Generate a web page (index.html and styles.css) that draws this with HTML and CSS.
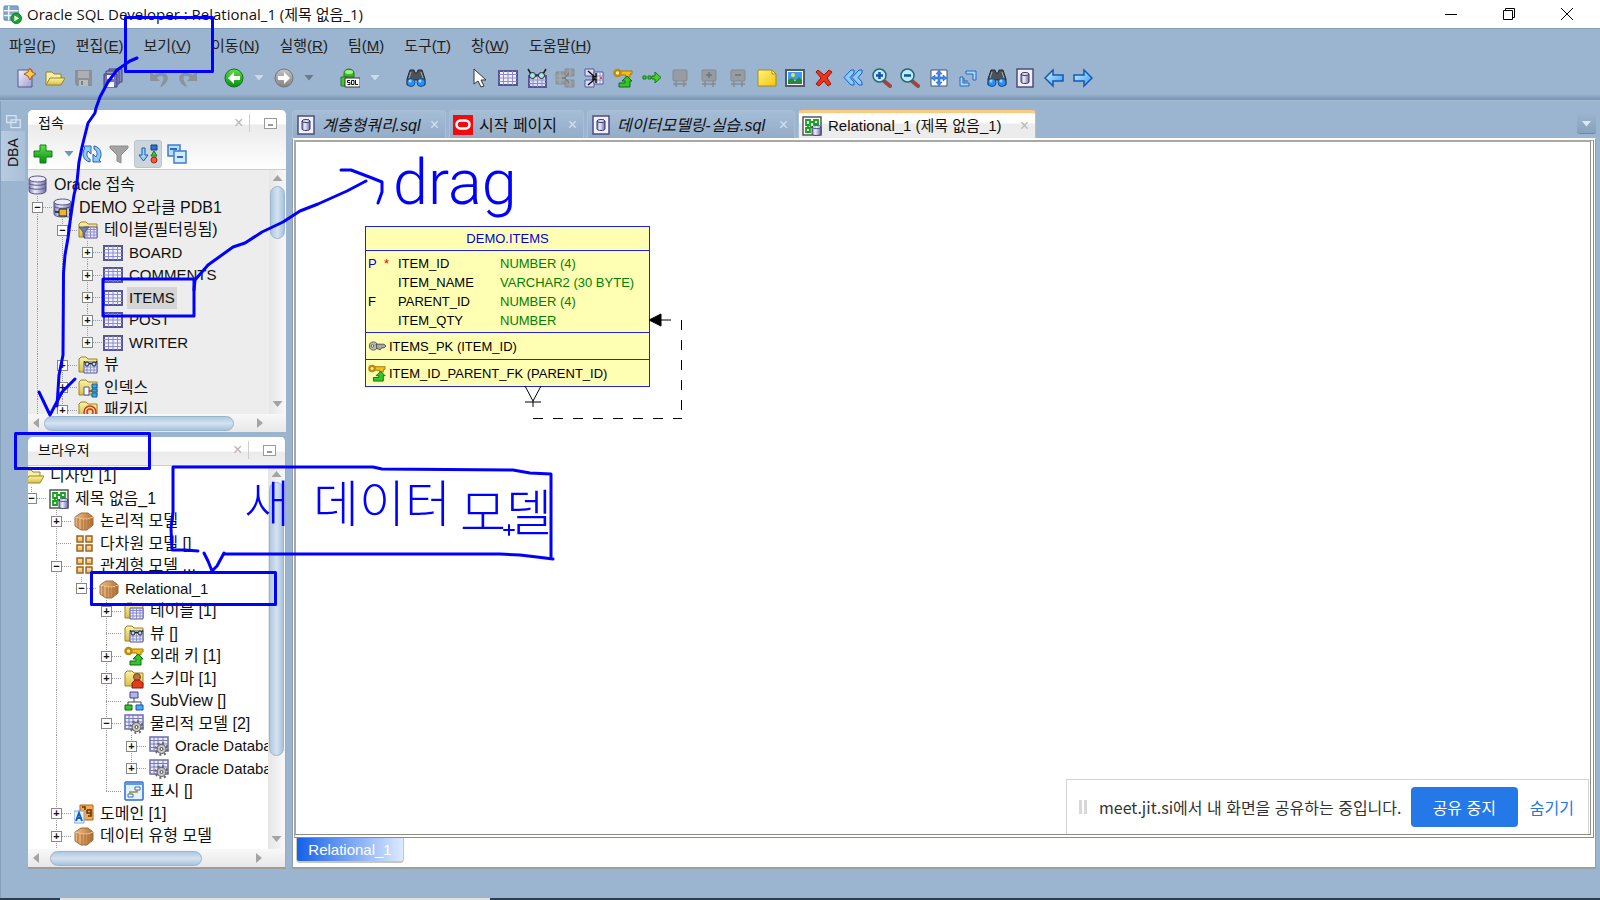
FILE: index.html
```html
<!DOCTYPE html>
<html lang="ko">
<head>
<meta charset="utf-8">
<title>Oracle SQL Developer : Relational_1 (제목 없음_1)</title>
<link rel="stylesheet" href="styles.css">
</head>
<body>
<svg class="defs" aria-hidden="true">
  <defs>
    <linearGradient id="g-lav" x1="0" y1="0" x2="1" y2="1"><stop offset="0" stop-color="#f4f4ff"/><stop offset="1" stop-color="#9c9cd2"/></linearGradient>
    <linearGradient id="g-cyl" x1="0" x2="1"><stop offset="0" stop-color="#7c7cb0"/><stop offset=".35" stop-color="#f0f0fc"/><stop offset="1" stop-color="#6a6aa4"/></linearGradient>
    <linearGradient id="g-fold" x1="0" y1="0" x2="0" y2="1"><stop offset="0" stop-color="#fbf3a4"/><stop offset="1" stop-color="#d9bf4c"/></linearGradient>
    <linearGradient id="g-blue" x1="0" y1="0" x2="1" y2="1"><stop offset="0" stop-color="#d8f2ff"/><stop offset="1" stop-color="#2a9cf4"/></linearGradient>
    <linearGradient id="g-green" x1="0" y1="0" x2="0" y2="1"><stop offset="0" stop-color="#5fe04a"/><stop offset="1" stop-color="#0a8c14"/></linearGradient>
    <linearGradient id="g-grey" x1="0" y1="0" x2="0" y2="1"><stop offset="0" stop-color="#c4c4c4"/><stop offset="1" stop-color="#828282"/></linearGradient>
    <linearGradient id="g-box" x1="0" x2="1"><stop offset="0" stop-color="#e9b884"/><stop offset=".5" stop-color="#d79a5e"/><stop offset="1" stop-color="#b06f34"/></linearGradient>
    <linearGradient id="g-note" x1="0" y1="0" x2="1" y2="1"><stop offset="0" stop-color="#fff58a"/><stop offset="1" stop-color="#f4c400"/></linearGradient>
  </defs>
  <symbol id="app" viewBox="0 0 20 20"><rect x="1" y="1" width="15" height="15" rx="1" fill="#7fa6cc" stroke="#6088b0"/><path d="M1 6h15M1 11h15M6 1v15" stroke="#eef5fb" stroke-width="1.500"/><circle cx="14" cy="14" r="5.500" fill="#1ea32c" stroke="#0b7a18"/><path d="M12 11l5 3-5 3z" fill="#fff"/></symbol>
  <symbol id="new" viewBox="0 0 20 20"><path d="M2 2h14v17H2z" fill="url(#g-lav)" stroke="#56568c"/><path d="M14 0l2 4 4 2-4 2-2 4-2-4-4-2 4-2z" fill="#ffd23c" stroke="#c0501c"/></symbol>
  <symbol id="open" viewBox="0 0 20 20"><path d="M1 17V4h6l2 2h7v4" fill="#f6efb0" stroke="#9a8424"/><path d="M1 17l4-7h15l-4 7z" fill="url(#g-fold)" stroke="#9a8424"/></symbol>
  <symbol id="save" viewBox="0 0 20 20"><path d="M1 2h17v16H3l-2-2z" fill="#8d9196"/><path d="M4 3h11v7H4z" fill="#abb0b6"/><path d="M5 12h9v6H5z" fill="#b8bcc0"/><path d="M7 13h2v4H7z" fill="#7e8286"/></symbol>
  <symbol id="saveall" viewBox="0 0 20 20"><path d="M6 1h13v13H6z" fill="#8888c0" stroke="#44447c"/><path d="M3 3h13v13H3z" fill="#9a9ad0" stroke="#44447c"/><path d="M1 6h13v13H1z" fill="#7474b4" stroke="#3c3c74"/><path d="M4 7h7v4H4zM4 14h7v5H4z" fill="#f4f4ff"/></symbol>
  <symbol id="undo" viewBox="0 0 20 20"><path d="M1 3v10h10l-3-3c4-4 8-2 6 3l-3 6c10-3 12-18-4-13L5 7z" fill="#8a929a"/></symbol>
  <symbol id="redo" viewBox="0 0 20 20"><path d="M19 3v10H9l3-3c-4-4-8-2-6 3l3 6C-1 16-3 1 13 6l2 1z" fill="#8a929a"/></symbol>
  <symbol id="back" viewBox="0 0 20 20"><circle cx="10" cy="10" r="9" fill="url(#g-green)" stroke="#0c7414"/><path d="M4 10l6-6v4h6v4h-6v4z" fill="#fff"/></symbol>
  <symbol id="fwd" viewBox="0 0 20 20"><circle cx="10" cy="10" r="9" fill="url(#g-grey)" stroke="#747474"/><path d="M16 10l-6-6v4H4v4h6v4z" fill="#fff"/></symbol>
  <symbol id="sql" viewBox="0 0 20 20"><path d="M4 5c0-2 2-4 5-4s5 2 5 4v4H4z" fill="#3cb828" stroke="#1d7c14"/><ellipse cx="9" cy="4" rx="4" ry="2" fill="#a6ee88"/><path d="M1 9h6v9H1z" fill="#4cc438" stroke="#1d7c14"/><path d="M5 10h15v9H5z" fill="#fff" stroke="#333"/><path d="M10 12.500H7.500v2H10v2H7.500M11.500 12.500H14v4h-2.500zM15.500 12v4.500H18" fill="none" stroke="#111"/></symbol>
  <symbol id="bino" viewBox="0 0 20 20"><path d="M4 2h4l1 3h2l1-3h4l3 9v6h-7v-5H8v5H1v-6z" fill="#4c5258" stroke="#23272b"/><path d="M5 4l-2 6M15 4l2 6" stroke="#a4acb4"/><circle cx="5" cy="14.500" r="4" fill="#2a90f4" stroke="#14508c"/><circle cx="15" cy="14.500" r="4" fill="#2a90f4" stroke="#14508c"/><circle cx="4" cy="13" r="1.500" fill="#9cd4ff"/><circle cx="14" cy="13" r="1.500" fill="#9cd4ff"/></symbol>
  <symbol id="cursor" viewBox="0 0 20 20"><path d="M5 1v15l4-3 3 6 3-1-3-6h5z" fill="#fff" stroke="#333"/></symbol>
  <symbol id="table" viewBox="0 0 20 20"><path d="M1 3h18v14H1z" fill="#f2f2ff" stroke="#55559a" stroke-width="2"/><path d="M1 6.500h18M1 10h18M1 13.500h18M5.500 3v14M10 3v14M14.500 3v14" stroke="#8c8cca"/></symbol>
  <symbol id="view" viewBox="0 0 20 20"><path d="M2 8h17v11H2z" fill="#dcdcf8" stroke="#55559a" stroke-width="2"/><path d="M2 12h17M2 15.500h17M6 8v11M10.500 8v11M15 8v11" stroke="#8c8cca"/><path d="M1 1l3 5M19 1l-3 5M8 7h4" stroke="#222" fill="none" stroke-width="1.500"/><circle cx="5.500" cy="7.500" r="3" fill="#a8e4ee" stroke="#222"/><circle cx="14.500" cy="7.500" r="3" fill="#a8e4ee" stroke="#222"/></symbol>
  <symbol id="split" viewBox="0 0 20 20"><path d="M1 4h9v12H1zM10 1h9v7h-9zM10 12h9v7h-9z" fill="#939aa1" stroke="#868d94"/><path d="M1 8h9M1 12h9M5 4v12M15 1v7M15 12v7" stroke="#a8afb6"/><path d="M7 10h3l4-5M10 10l4 5" stroke="#707070" fill="none"/></symbol>
  <symbol id="merge" viewBox="0 0 20 20"><path d="M1 1h9v7H1zM1 12h9v7H1z" fill="#dcdcf6" stroke="#55559a"/><path d="M10 4h9v12h-9z" fill="#f4f4ff" stroke="#55559a"/><path d="M13 4v12M16 4v12M10 8h9M10 12h9" stroke="#8c8cca"/><path d="M4 3l7 6M4 17l7-6M8 9h4V5M8 11h4v4" stroke="#111" fill="none" stroke-width="1.500"/><path d="M16 9h2v2h-2z" fill="#e44"/></symbol>
  <symbol id="fk" viewBox="0 0 20 20"><path d="M7 3h12v3h-2v3h-4V7H7z" fill="#f4be1c" stroke="#a87400"/><circle cx="4.500" cy="5" r="3" fill="#fff0a0" stroke="#c08a08" stroke-width="2.500"/><path d="M6 15h6v-2H9l5-5 5 5h-2v6H6z" fill="#34c42c" stroke="#0d6c10"/></symbol>
  <symbol id="steps" viewBox="0 0 20 20"><path d="M1 8h3v3H1zM6 8h3v3H6zM10 8h3V4l6 5.500-6 5.500v-4h-3z" fill="#48cc30" stroke="#137c18"/></symbol>
  <symbol id="gbox" viewBox="0 0 20 20"><rect x="3" y="2" width="14" height="11" rx="1" fill="#969ca2" stroke="#858b91"/><path d="M6 13v6M14 13v6M3 16h14" stroke="#858b91" stroke-width="1.500"/></symbol>
  <symbol id="gplus" viewBox="0 0 20 20"><use href="#gbox"/><path d="M10 4v6M7 7h6" stroke="#6c747c" stroke-width="1.500"/></symbol>
  <symbol id="gminus" viewBox="0 0 20 20"><use href="#gbox"/><path d="M7 7h6" stroke="#6c747c" stroke-width="1.500"/></symbol>
  <symbol id="note" viewBox="0 0 20 20"><path d="M1 2h14l4 4v12H1z" fill="url(#g-note)" stroke="#a88a10"/><path d="M15 2v4h4z" fill="#fffbd0" stroke="#a88a10"/></symbol>
  <symbol id="image" viewBox="0 0 20 20"><path d="M1 2h18v16H1z" fill="#fff" stroke="#4c5c6c" stroke-width="2"/><path d="M3 4h14v8H3z" fill="#3c9cf4"/><path d="M3 16v-4l4-2 3 3 4-4 3 3v4z" fill="#28883c"/><circle cx="8" cy="7" r="2" fill="#ffe030"/></symbol>
  <symbol id="del" viewBox="0 0 20 20"><path d="M4 2l6 5 5-5 3 2-5 6 4 6-3 2-4-5-5 5-3-2 5-6-5-6z" fill="#ee3418" stroke="#9c1404"/></symbol>
  <symbol id="rew" viewBox="0 0 20 20"><path d="M11 2H8L1 9.500 8 17h3v-3L7 9.500 11 5zM19 2h-3L9 9.500l7 7.500h3v-3l-4-4.500L19 5z" fill="#8cccff" stroke="#1c5cc0"/></symbol>
  <symbol id="zoomin" viewBox="0 0 20 20"><path d="M12 13l6 5" stroke="#a04440" stroke-width="4" stroke-linecap="round"/><circle cx="7.500" cy="7.500" r="6.500" fill="#bdeef4" stroke="#2c6478" stroke-width="1.500"/><path d="M7.500 4v7M4 7.500h7" stroke="#1450b4" stroke-width="2.500"/></symbol>
  <symbol id="zoomout" viewBox="0 0 20 20"><path d="M12 13l6 5" stroke="#a04440" stroke-width="4" stroke-linecap="round"/><circle cx="7.500" cy="7.500" r="6.500" fill="#bdeef4" stroke="#2c6478" stroke-width="1.500"/><path d="M4 7.500h7" stroke="#1450b4" stroke-width="2.500"/></symbol>
  <symbol id="fit" viewBox="0 0 20 20"><path d="M2 2h16v16H2z" fill="#fff" stroke="#44546c"/><path d="M10 2l3 4h-2v3h3V7l4 3-4 3v-2h-3v3h2l-3 4-3-4h2v-3H6v2l-4-3 4-3v2h3V6H7z" fill="#3c8cf0" stroke="#1850b0" stroke-width=".5"/></symbol>
  <symbol id="resize" viewBox="0 0 20 20"><path d="M8 3h10v9h-3V6H8zM2 9h3v6h6v3H2z" fill="#a4d8ff" stroke="#2468c8"/><path d="M6 10v3h4" fill="none" stroke="#2468c8"/></symbol>
  <symbol id="dbpage" viewBox="0 0 20 20"><path d="M2 1h16v18H2z" fill="#f2f2fc" stroke="#4c4c84" stroke-width="1.500"/><path d="M6 6v8c0 2 8 2 8 0V6z" fill="url(#g-cyl)" stroke="#36366c"/><ellipse cx="10" cy="6" rx="4" ry="1.500" fill="#e4e4f8" stroke="#36366c"/></symbol>
  <symbol id="left" viewBox="0 0 20 20"><path d="M1 10l8-8v5h10v6H9v5z" fill="url(#g-blue)" stroke="#1458b4" stroke-width="1.500"/></symbol>
  <symbol id="right" viewBox="0 0 20 20"><path d="M19 10l-8-8v5H1v6h10v5z" fill="url(#g-blue)" stroke="#1458b4" stroke-width="1.500"/></symbol>
  <symbol id="oracle" viewBox="0 0 20 20"><path d="M0 0h20v20H0z" fill="#f00c0c"/><rect x="3.500" y="5.500" width="13" height="8" rx="4" fill="none" stroke="#fff" stroke-width="2.500"/></symbol>
  <symbol id="model" viewBox="0 0 20 20"><path d="M1 1h18v18H1z" fill="#fff" stroke="#555" stroke-width="1.500"/><path d="M4 4h4v5H4zM12 4h4v4h-4zM4 12h4v4H4zM8 6h4M6 9v3M14 8v3H8" fill="none" stroke="#14a41c" stroke-width="1.800"/><path d="M10 11v7c0 2 9 2 9 0v-7z" fill="url(#g-cyl)" stroke="#44447c"/><ellipse cx="14.500" cy="11" rx="4.500" ry="1.500" fill="#e4e4f8" stroke="#44447c"/></symbol>
  <symbol id="db" viewBox="0 0 20 20"><path d="M1 4v12c0 4 17 4 17 0V4z" fill="url(#g-cyl)" stroke="#55558c"/><path d="M1 8c0 3 17 3 17 0M1 12c0 3 17 3 17 0" fill="none" stroke="#55558c"/><ellipse cx="9.500" cy="4" rx="8.500" ry="3" fill="#ececfc" stroke="#55558c"/></symbol>
  <symbol id="dbplug" viewBox="0 0 20 20"><use href="#db"/><path d="M6 11h8v7H6z" fill="#e8b830" stroke="#222"/><path d="M14 12h5M14 16h5M2 14h4" stroke="#222" stroke-width="1.500"/><path d="M14 10h2v9h-2z" fill="#fff" stroke="#222" stroke-width=".5"/></symbol>
  <symbol id="folder" viewBox="0 0 20 20"><path d="M1 17V4l2-2h5l2 2h9v13z" fill="url(#g-fold)" stroke="#9a8424"/></symbol>
  <symbol id="ftable" viewBox="0 0 20 20"><use href="#folder"/><path d="M6 7h13v11H6z" fill="#ececff" stroke="#55559a"/><path d="M6 9.500h13M6 12h13M6 15h13M9 7v11M12.500 7v11M16 7v11" stroke="#8c8cca"/></symbol>
  <symbol id="ffilter" viewBox="0 0 20 20"><use href="#ftable"/><path d="M1 7h10l-4 5v6l-2-2v-4z" fill="#777b9c" stroke="#44486c" stroke-width=".7"/></symbol>
  <symbol id="fview" viewBox="0 0 20 20"><use href="#ftable"/><circle cx="9" cy="9" r="2" fill="#a8e4ee" stroke="#222"/><circle cx="16" cy="9" r="2" fill="#a8e4ee" stroke="#222"/><path d="M11 8.500h3M6 6l1 2M19 6l-1 2" stroke="#222"/></symbol>
  <symbol id="findex" viewBox="0 0 20 20"><use href="#folder"/><path d="M6 9h5v8H6z" fill="#fff" stroke="#55559a"/><path d="M11 13h4" stroke="#222"/><path d="M14 6h5v4h-5zM14 11h5v3h-5zM14 15h5v4h-5z" fill="#3ca4e8" stroke="#14609c"/></symbol>
  <symbol id="fpack" viewBox="0 0 20 20"><use href="#folder"/><circle cx="12" cy="12" r="6" fill="#f8d8a0" stroke="#d03818" stroke-width="1.500"/><circle cx="12" cy="12" r="3" fill="none" stroke="#d03818" stroke-width="1.500"/></symbol>
  <symbol id="fuser" viewBox="0 0 20 20"><use href="#folder"/><circle cx="13" cy="8" r="3.500" fill="#b8763c" stroke="#7c4414"/><path d="M8 19v-5l3-3h4l4 3v5z" fill="#e03c20" stroke="#8c1808"/></symbol>
  <symbol id="crate" viewBox="0 0 20 20"><path d="M1 6l6-4h7l5 4v8l-6 5H7l-6-4z" fill="url(#g-box)" stroke="#a06c38"/><path d="M1 6l7 2h6l5-2" fill="none" stroke="#f0cc9c"/><path d="M8 8v11M4 7v10M14 8v10M11 8v11M17 7v9" fill="none" stroke="#a8703c"/></symbol>
  <symbol id="cubes" viewBox="0 0 20 20"><path d="M3 2h6v6H3zM12 2h6v6h-6zM3 11h6v6H3zM12 11h6v6h-6z" fill="#f2c470" stroke="#9a6424" stroke-width="1.500"/><path d="M4 4h4M13 4h4M4 13h4M13 13h4" stroke="#fff0c0"/></symbol>
  <symbol id="sub" viewBox="0 0 20 20"><path d="M10 6v5M4 15v-4h13v4" fill="none" stroke="#444"/><path d="M6 1h8v6H6z" fill="#b4b4ec" stroke="#44448c"/><path d="M1 14h7v5H1z" fill="#38c030" stroke="#0d6c10"/><path d="M12 14h7v5h-7z" fill="#4ca8f8" stroke="#1450a4"/></symbol>
  <symbol id="phys" viewBox="0 0 20 20"><path d="M1 1h18v14H1z" fill="#ececff" stroke="#6c6cb0" stroke-width="1.500"/><path d="M1 4.500h18M1 8h18M1 11.500h18M5 1v14M9 1v14M14 1v14" stroke="#7878bc"/><circle cx="12.500" cy="13" r="4.500" fill="#c8c8c8" stroke="#555"/><circle cx="12.500" cy="13" r="6" fill="none" stroke="#666" stroke-width="2" stroke-dasharray="2 2.700"/><circle cx="12.500" cy="13" r="1.500" fill="#fff" stroke="#444"/></symbol>
  <symbol id="disp" viewBox="0 0 20 20"><rect x="1" y="1" width="18" height="18" rx="1" fill="#e4f2ff" stroke="#2c6cc8" stroke-width="1.500"/><path d="M1 3h18" stroke="#5c9ce8" stroke-width="2"/><path d="M11 6h5v3h-5zM4 13h5v3H4z" fill="#fff" stroke="#2c6cc8"/><path d="M6 13v-2h7V9" fill="none" stroke="#a08c20" stroke-width="1.500"/></symbol>
  <symbol id="domain" viewBox="0 0 20 20"><path d="M6 1h13v15H6z" fill="#f8a850" stroke="#b46414"/><path d="M13 6h4v6h-3M13 6v3h4M8 3h3v3" fill="none" stroke="#5c3410" stroke-width="1.500"/><path d="M0 7h10v12H0z" fill="#e4f2ff" stroke="#78a8dc"/><path d="M2 17l3-8 3 8M3 14h4" fill="none" stroke="#145cc0" stroke-width="2"/></symbol>
  <symbol id="plus" viewBox="0 0 20 20"><path d="M7 1h6v6h6v6h-6v6H7v-6H1V7h6z" fill="url(#g-green)" stroke="#0c8014"/></symbol>
  <symbol id="refresh" viewBox="0 0 20 20"><path d="M1 2h8v8L6 7c-2 3-1 7 2 8v3C1 17-1 9 3 4zM19 18h-8v-8l3 3c2-3 1-7-2-8V2c7 1 9 9 5 14z" fill="#8cc8fa" stroke="#2464b4"/></symbol>
  <symbol id="funnel" viewBox="0 0 20 20"><path d="M1 2h18v2l-7 7v8l-4-2v-6L1 4z" fill="#a4a4a4" stroke="#8c8c8c"/></symbol>
  <symbol id="sort" viewBox="0 0 20 20"><path d="M4 4h3v7h3l-4.500 6L1 11h3z" fill="#9cd4ff" stroke="#1458b4"/><path d="M13 1h6v5h-6z" fill="#2c74d8" stroke="#123c84"/><path d="M16 7l3 5h-6z" fill="#44cc34" stroke="#147414"/><circle cx="16" cy="16" r="3" fill="#f45c34" stroke="#a42410"/></symbol>
  <symbol id="collapse" viewBox="0 0 20 20"><path d="M1 1h12v11H1z" fill="#b8dcfc" stroke="#3c7cd0" stroke-width="1.500"/><path d="M7 7h12v12H7z" fill="#d4ebff" stroke="#3c7cd0" stroke-width="1.500"/><path d="M3 5h7M10 13h6" stroke="#2c6cc8" stroke-width="2"/></symbol>
  <symbol id="restore" viewBox="0 0 20 20"><path d="M2 2h11v8H2zM7 7h11v9H7z" fill="#9bb4cf" stroke="#d4e4f2" stroke-width="1.500"/></symbol>
  <symbol id="key" viewBox="0 0 20 20"><circle cx="6" cy="10" r="4.500" fill="#bbb" stroke="#555"/><path d="M9 8h9l2 2-2 2h-3l-1 2-4-1z" fill="#aaa" stroke="#444"/><circle cx="5" cy="10" r="1.500" fill="#ffffb3" stroke="#555"/></symbol>
</svg>

<header class="titlebar">
  <svg class="ico"><use href="#app"/></svg>
  <h1>Oracle SQL Developer : Relational_1 (제목 없음_1)</h1>
  <div class="winbtns">
    <button aria-label="최소화"><svg viewBox="0 0 14 14"><path d="M1 7.500h12" stroke="#000"/></svg></button>
    <button aria-label="이전 크기로"><svg viewBox="0 0 14 14"><path d="M1.500 3.500h9v9h-9zM3.500 3V1.500h9v9H11" fill="none" stroke="#000"/></svg></button>
    <button aria-label="닫기"><svg viewBox="0 0 14 14"><path d="M1 1l12 12M13 1L1 13" stroke="#000"/></svg></button>
  </div>
</header>

<nav class="menubar">
  <button>파일(<u>F</u>)</button><button>편집(<u>E</u>)</button><button>보기(<u>V</u>)</button><button>이동(<u>N</u>)</button><button>실행(<u>R</u>)</button><button>팀(<u>M</u>)</button><button>도구(<u>T</u>)</button><button>창(<u>W</u>)</button><button>도움말(<u>H</u>)</button>
</nav>

<div class="toolbar">
  <div class="tools files">
    <button aria-label="새로 만들기"><svg><use href="#new"/></svg></button>
    <button aria-label="열기"><svg><use href="#open"/></svg></button>
    <button aria-label="저장"><svg><use href="#save"/></svg></button>
    <button aria-label="모두 저장"><svg><use href="#saveall"/></svg></button>
  </div>
  <div class="tools undo">
    <button aria-label="실행 취소"><svg><use href="#undo"/></svg></button>
    <button aria-label="재실행"><svg><use href="#redo"/></svg></button>
  </div>
  <div class="tools history">
    <button aria-label="뒤로"><svg><use href="#back"/></svg></button>
    <button class="drop light" aria-label="뒤로 목록"></button>
    <button aria-label="앞으로"><svg><use href="#fwd"/></svg></button>
    <button class="drop dark" aria-label="앞으로 목록"></button>
  </div>
  <div class="tools history">
    <button aria-label="SQL 워크시트"><svg><use href="#sql"/></svg></button>
    <button class="drop light" aria-label="워크시트 목록"></button>
  </div>
  <div class="tools find">
    <button aria-label="찾기"><svg><use href="#bino"/></svg></button>
  </div>
  <div class="tools diagram-tools">
    <button aria-label="선택"><svg><use href="#cursor"/></svg></button>
    <button aria-label="새 테이블"><svg><use href="#table"/></svg></button>
    <button aria-label="새 뷰"><svg><use href="#view"/></svg></button>
    <button aria-label="테이블 분할"><svg><use href="#split"/></svg></button>
    <button aria-label="테이블 병합"><svg><use href="#merge"/></svg></button>
    <button aria-label="새 외래 키"><svg><use href="#fk"/></svg></button>
    <button aria-label="새 화살표"><svg><use href="#steps"/></svg></button>
    <button aria-label="유형 대체"><svg><use href="#gbox"/></svg></button>
    <button aria-label="추가"><svg><use href="#gplus"/></svg></button>
    <button aria-label="제거"><svg><use href="#gminus"/></svg></button>
    <button aria-label="새 노트"><svg><use href="#note"/></svg></button>
    <button aria-label="새 그림"><svg><use href="#image"/></svg></button>
    <button aria-label="삭제"><svg><use href="#del"/></svg></button>
    <button aria-label="엔지니어링"><svg><use href="#rew"/></svg></button>
    <button aria-label="확대"><svg><use href="#zoomin"/></svg></button>
    <button aria-label="축소"><svg><use href="#zoomout"/></svg></button>
    <button aria-label="화면에 맞춤"><svg><use href="#fit"/></svg></button>
    <button aria-label="기본 크기"><svg><use href="#resize"/></svg></button>
    <button aria-label="검색"><svg><use href="#bino"/></svg></button>
    <button aria-label="DDL 생성"><svg><use href="#dbpage"/></svg></button>
    <button aria-label="이전"><svg><use href="#left"/></svg></button>
    <button aria-label="다음"><svg><use href="#right"/></svg></button>
  </div>
</div>

<main class="workspace">
  <aside class="gutter">
    <button class="restore" aria-label="복원"><svg><use href="#restore"/></svg></button>
    <button class="dba">DBA</button>
  </aside>

  <div class="dock">
    <section class="panel connections">
      <header class="panel-head"><h2>접속</h2><button class="x" aria-label="닫기">×</button><button class="min" aria-label="최소화"></button></header>
      <div class="panel-tools">
        <button aria-label="새 접속"><svg><use href="#plus"/></svg></button>
        <button class="drop blue" aria-label="접속 목록"></button>
        <button aria-label="새로 고침"><svg><use href="#refresh"/></svg></button>
        <button aria-label="필터"><svg><use href="#funnel"/></svg></button>
        <button class="on" aria-label="정렬"><svg><use href="#sort"/></svg></button>
        <button aria-label="모두 축소"><svg><use href="#collapse"/></svg></button>
      </div>
      <div class="view">
        <ul class="tree">
          <li><svg><use href="#db"/></svg><span>Oracle 접속</span></li>
          <li><i class="node"><button>−</button></i><svg><use href="#dbplug"/></svg><span>DEMO 오라클 PDB1</span></li>
          <li><i class="guide"></i><i class="node"><button>−</button></i><svg><use href="#ffilter"/></svg><span>테이블(필터링됨)</span></li>
          <li><i class="guide"></i><i class="guide"></i><i class="node"><button>+</button></i><svg><use href="#table"/></svg><span class="en">BOARD</span></li>
          <li><i class="guide"></i><i class="guide"></i><i class="node"><button>+</button></i><svg><use href="#table"/></svg><span class="en">COMMENTS</span></li>
          <li><i class="guide"></i><i class="guide"></i><i class="node"><button>+</button></i><svg><use href="#table"/></svg><span class="en selected">ITEMS</span></li>
          <li><i class="guide"></i><i class="guide"></i><i class="node"><button>+</button></i><svg><use href="#table"/></svg><span class="en">POST</span></li>
          <li><i class="guide"></i><i class="guide"></i><i class="node last"><button>+</button></i><svg><use href="#table"/></svg><span class="en">WRITER</span></li>
          <li><i class="guide"></i><i class="node"><button>+</button></i><svg><use href="#fview"/></svg><span>뷰</span></li>
          <li><i class="guide"></i><i class="node"><button>+</button></i><svg><use href="#findex"/></svg><span>인덱스</span></li>
          <li><i class="guide"></i><i class="node"><button>+</button></i><svg><use href="#fpack"/></svg><span>패키지</span></li>
        </ul>
        <div class="vbar"><b class="up"></b><b class="thumb short"></b><b class="down"></b></div>
      </div>
      <div class="hbar"><b class="lt"></b><b class="thumb wide"></b><b class="rt"></b></div>
    </section>

    <section class="panel browser">
      <header class="panel-head"><h2>브라우저</h2><button class="x" aria-label="닫기">×</button><button class="min" aria-label="최소화"></button></header>
      <div class="view">
        <ul class="tree scrolled">
          <li><svg><use href="#open"/></svg><span>디자인 [1]</span></li>
          <li><i class="node last"><button>−</button></i><svg><use href="#model"/></svg><span>제목 없음_1</span></li>
          <li><i></i><i class="node"><button>+</button></i><svg><use href="#crate"/></svg><span>논리적 모델</span></li>
          <li><i></i><i class="node"></i><svg><use href="#cubes"/></svg><span>다차원 모델 []</span></li>
          <li><i></i><i class="node"><button>−</button></i><svg><use href="#cubes"/></svg><span>관계형 모델 ...</span></li>
          <li><i></i><i class="guide"></i><i class="node last"><button>−</button></i><svg><use href="#crate"/></svg><span class="en">Relational_1</span></li>
          <li><i></i><i class="guide"></i><i></i><i class="node"><button>+</button></i><svg><use href="#ftable"/></svg><span>테이블 [1]</span></li>
          <li><i></i><i class="guide"></i><i></i><i class="node"></i><svg><use href="#fview"/></svg><span>뷰 []</span></li>
          <li><i></i><i class="guide"></i><i></i><i class="node"><button>+</button></i><svg><use href="#fk"/></svg><span>외래 키 [1]</span></li>
          <li><i></i><i class="guide"></i><i></i><i class="node"><button>+</button></i><svg><use href="#fuser"/></svg><span>스키마 [1]</span></li>
          <li><i></i><i class="guide"></i><i></i><i class="node"></i><svg><use href="#sub"/></svg><span>SubView []</span></li>
          <li><i></i><i class="guide"></i><i></i><i class="node"><button>−</button></i><svg><use href="#phys"/></svg><span>물리적 모델 [2]</span></li>
          <li><i></i><i class="guide"></i><i></i><i class="guide"></i><i class="node"><button>+</button></i><svg><use href="#phys"/></svg><span class="en">Oracle Databa</span></li>
          <li><i></i><i class="guide"></i><i></i><i class="guide"></i><i class="node last"><button>+</button></i><svg><use href="#phys"/></svg><span class="en">Oracle Databa</span></li>
          <li><i></i><i class="guide"></i><i></i><i class="node last"></i><svg><use href="#disp"/></svg><span>표시 []</span></li>
          <li><i></i><i class="node"><button>+</button></i><svg><use href="#domain"/></svg><span>도메인 [1]</span></li>
          <li><i></i><i class="node"><button>+</button></i><svg><use href="#crate"/></svg><span>데이터 유형 모델</span></li>
          <li><i></i><i class="guide"></i></li>
        </ul>
        <div class="vbar"><b class="up"></b><b class="thumb tall"></b><b class="down"></b></div>
      </div>
      <div class="hbar"><b class="lt"></b><b class="thumb mid"></b><b class="rt"></b></div>
    </section>
  </div>

  <section class="editor">
    <div class="tabs">
      <div class="tab t1"><svg><use href="#dbpage"/></svg><a href="#q1"><em>계층형쿼리.sql</em></a><button aria-label="닫기">×</button></div>
      <div class="tab t2"><svg><use href="#oracle"/></svg><a href="#start">시작 페이지</a><button aria-label="닫기">×</button></div>
      <div class="tab t3"><svg><use href="#dbpage"/></svg><a href="#q2"><em>데이터모델링-실습.sql</em></a><button aria-label="닫기">×</button></div>
      <div class="tab t4 active"><svg><use href="#model"/></svg><a href="#rel">Relational_1 (제목 없음_1)</a><button aria-label="닫기">×</button></div>
      <button class="tablist" aria-label="탭 목록"></button>
    </div>
    <div class="frame">
      <div class="canvas">
        <article class="entity">
          <h3>DEMO.ITEMS</h3>
          <table>
            <tr><td class="pk">P</td><td class="req">*</td><td>ITEM_ID</td><td class="type">NUMBER (4)</td></tr>
            <tr><td></td><td></td><td>ITEM_NAME</td><td class="type">VARCHAR2 (30 BYTE)</td></tr>
            <tr><td>F</td><td></td><td>PARENT_ID</td><td class="type">NUMBER (4)</td></tr>
            <tr><td></td><td></td><td>ITEM_QTY</td><td class="type">NUMBER</td></tr>
          </table>
          <p><svg><use href="#key"/></svg>ITEMS_PK (ITEM_ID)</p>
          <p><svg><use href="#fk"/></svg>ITEM_ID_PARENT_FK (PARENT_ID)</p>
        </article>
        <svg class="relation" viewBox="0 0 170 110" width="170" height="110">
          <path d="M125 10l12-6v12zM137 10h10" fill="#000" stroke="#000"/>
          <path d="M9 108.500H158" fill="none" stroke="#000" stroke-dasharray="10 10"/>
          <path d="M157.500 10V108" fill="none" stroke="#000" stroke-dasharray="10 10"/>
          <path d="M1 76l8 15 8-15M9 91v6M1 92h16" fill="none" stroke="#000"/>
        </svg>
        <div class="share">
          <span class="grip"></span>
          <span class="msg">meet.jit.si에서 내 화면을 공유하는 중입니다.</span>
          <button class="stop">공유 중지</button>
          <button class="hide">숨기기</button>
        </div>
      </div>
      <div class="subtabs"><button>Relational_1</button></div>
    </div>
  </section>
</main>
<footer class="taskbar"><span></span></footer>

<svg class="ink" viewBox="0 0 1600 900" width="1600" height="900">
  <g fill="none" stroke="#00f" stroke-width="3" stroke-linejoin="round" stroke-linecap="round">
    <path d="M125.500 17.500h87v54h-87z"/>
    <path d="M137 58l-7 3-13 9-9 12-8 15-4 11-1 5-7 10-3 12-3 12-3 15-2 20-3 13-2 13-2 14-2 16-3 17-1.500 18-.5 82-4 20-2 31"/>
    <path d="M39 392l11 23 12-23 13-13"/>
    <path d="M103 279h91v37h-91z"/>
    <path d="M194 290l1-10 13-15 25-18 12-4 17-11 21-10 17-11 18-7 29-13 19-10"/>
    <path d="M341 170h10l21 8 10 4v10l-4 11"/>
    <path d="M15.500 433.500h134v35h-134z"/>
    <path d="M198 551l-13-1h-13l-1-22 2-16v-45h200l9 2 131 1 17 3 21 1v83"/>
    <path d="M224 554h276l20 1 17 2 16 2"/>
    <path d="M204 553l4 8 4 10 5-5 7-13"/>
    <path d="M91.500 572.500h184v32h-184z"/>
    <path d="M504 530h10M509 525v10" stroke-width="2"/>
  </g>
  <g fill="#00f">
    <text class="note-en" x="393" y="204">drag</text>
    <text class="note-ko" x="244" y="522">새</text>
    <text class="note-ko" x="313" y="522">데이터</text>
    <text class="note-ko" x="460" y="531">모델</text>
  </g>
</svg>
</body>
</html>
```
FILE: styles.css
```css
* { box-sizing: border-box; }
body {
  margin: 0; min-height: 100vh; display: flex; flex-direction: column;
  background: #9bb4cf; color: #111; overflow: hidden;
  font: 16px/22px "Liberation Sans", "Noto Sans CJK KR", sans-serif;
}
button { font: inherit; color: inherit; background: none; border: 0; padding: 0; margin: 0; display: block; }
h1, h2, h3, p, ul { margin: 0; padding: 0; font-weight: normal; list-style: none; }
a { color: inherit; text-decoration: none; }
svg { display: block; flex: none; }
.defs { position: absolute; width: 0; height: 0; }

.titlebar { display: flex; align-items: center; height: 29px; padding: 0 26px 0 3px; background: #fff; border-bottom: 1px solid #86a3bd; }
.titlebar .ico { width: 19px; height: 19px; }
.titlebar h1 { flex: 1; margin-left: 5px; font: 15px/22px "Open Sans", "Noto Sans CJK KR", sans-serif; }
.winbtns { display: flex; gap: 44px; }
.winbtns svg { width: 14px; height: 14px; }

.menubar { display: flex; gap: 20px; height: 33px; padding: 0 9px; align-items: center; color: #222; }
.menubar button { font-size: 15px; }

.toolbar { display: flex; height: 39px; padding: 0 17px 8px 16px; align-items: center; background: linear-gradient(transparent 32px, #7793b3 38px, #a6bdd6 38px); }
.tools { display: flex; gap: 9px; }
.tools svg { width: 20px; height: 20px; }
.tools.undo { margin-left: 26px; }
.tools.history { margin-left: 26px; gap: 10px; align-items: center; }
.tools.find { margin-left: 26px; }
.diagram-tools { width: 624px; margin-left: 43px; gap: 0; justify-content: space-between; }
.drop { width: 10px; height: 6px; clip-path: polygon(0 0, 100% 0, 50% 100%); }
.drop.light { background: #c8dcec; }
.drop.dark { background: #6c7c8c; }
.drop.blue { background: #6c94c0; }

.workspace { flex: 1; display: grid; grid-template-columns: 27px 258px 1fr; padding: 9px 4px 29px 0; border-left: 1px solid #84a0bc; }
.gutter { display: flex; flex-direction: column; align-items: flex-start; padding-top: 4px; }
.restore { margin-left: 4px; }
.restore svg { width: 17px; height: 17px; }
.dba { width: 24px; height: 50px; background: linear-gradient(90deg, #a9c0d8, #b8cbe0); writing-mode: vertical-rl; transform: rotate(180deg); font-size: 14px; line-height: 24px; text-align: center; padding-top: 6px; }

.dock { display: flex; flex-direction: column; gap: 5px; min-height: 0; }
.panel { display: flex; flex-direction: column; min-height: 0; border-radius: 5px 5px 0 0; overflow: hidden; background: #ededed; }
.connections { flex: 0 0 322px; }
.browser { flex: 1 0 0; border-bottom: 2px solid #9c9c9c; border-right: 1px solid #a8a8a8; }
.browser .view { background: #fff; border-top: 1px solid #ccc; }
.panel-head { display: flex; align-items: center; height: 28px; flex: none; padding: 0 9px 2px 10px; background: linear-gradient(#fff 14px, #ebebeb 15px, #f0f0f0); }
.panel-head h2 { flex: 1; font-size: 14px; }
.panel-head .x { width: 16px; height: 18px; color: #b4b4b4; font-size: 16px; line-height: 18px; border-right: 1px solid #ccc; padding-right: 6px; }
.panel-head .min { width: 13px; height: 11px; margin-left: 14px; border: 1px solid #9a9a9a; background: linear-gradient(#999, #999) 3px 5px / 5px 2px no-repeat #fff; }
.panel-tools { display: flex; align-items: center; height: 32px; flex: none; padding: 0 5px; background: linear-gradient(#f0f0f0, #fff); border-bottom: 1px solid #ccc; }
.panel-tools svg { width: 20px; height: 20px; }
.panel-tools button + button { margin-left: 7px; }
.panel-tools button.drop { margin: 0 8px 0 11px; }
.panel-tools .drop + button { margin-left: 0; }
.panel-tools button.on { padding: 3px; margin-left: 5px; border: 1px solid #bcc4cc; border-radius: 3px; background: #ccd4dc; }
.panel-tools .on + button { margin-left: 5px; }

.view { flex: 1; display: flex; min-height: 0; overflow: hidden; }
.tree { --line: 9px; flex: 1; min-width: 0; overflow: hidden; padding-top: 4px; }
.tree.scrolled { --line: 7px; padding-top: 0; margin: -1px 0 0 -4px; }
.tree li { display: flex; align-items: center; height: 22px; line-height: 22px; white-space: nowrap; }
.tree li:nth-child(even) { height: 23px; }
.tree svg { width: 20px; height: 20px; margin-right: 4px; }
.tree span { padding: 0 2px; }
.tree .en { font-size: 15px; }
.tree .selected { background: #d5d5d5; }
.tree i { flex: none; width: 25px; align-self: stretch; display: flex; align-items: center; }
.guide { background: repeating-linear-gradient(#999 0 1px, transparent 1px 2px) var(--line) 0 / 1px 100% no-repeat; }
.node {
  background:
    repeating-linear-gradient(#999 0 1px, transparent 1px 2px) var(--line) 0 / 1px 100% no-repeat,
    repeating-linear-gradient(90deg, #999 0 1px, transparent 1px 2px) var(--line) 11px / 15px 1px no-repeat;
}
.node.last { background-size: 1px 11px, 15px 1px; }
.node button { width: 11px; height: 11px; margin-left: calc(var(--line) - 5px); border: 1px solid #888; background: #fff; font: bold 11px/9px "Liberation Sans", sans-serif; text-align: center; }

.vbar { width: 17px; flex: none; display: flex; flex-direction: column; align-items: center; padding: 5px 0 7px; background: linear-gradient(90deg, #e6e6e6, #f8f8f8); }
.hbar { height: 18px; flex: none; display: flex; align-items: center; padding: 0 23px 0 5px; background: linear-gradient(#f8f8f8, #e8e8e8); }
.thumb { background: linear-gradient(90deg, #b0c8e0, #d4e2f0 50%, #a8c2de); border: 1px solid #9ab4d0; border-radius: 8px; }
.vbar .thumb { width: 15px; margin-top: 5px; }
.hbar .thumb { height: 15px; background: linear-gradient(#b0c8e0, #d4e2f0 50%, #a8c2de); margin-left: 5px; }
.short { height: 53px; }
.tall { height: 274px; }
.wide { width: 190px; }
.hbar .mid { width: 152px; margin-left: 11px; }
.up, .down { width: 10px; height: 6px; background: #a4a4a4; }
.up { clip-path: polygon(50% 0, 100% 100%, 0 100%); }
.down { margin-top: auto; clip-path: polygon(0 0, 100% 0, 50% 100%); }
.lt, .rt { width: 6px; height: 10px; background: #a4a4a4; }
.lt { clip-path: polygon(0 50%, 100% 0, 100% 100%); }
.rt { margin-left: auto; clip-path: polygon(0 0, 100% 50%, 0 100%); }

.editor { display: flex; flex-direction: column; min-width: 0; margin-left: 6px; }
.tabs { display: flex; gap: 3px; height: 28px; flex: none; }
.tab { display: flex; align-items: center; padding: 0 6px 0 3px; border-radius: 4px 4px 0 0; background: linear-gradient(#a6bdd6, #93acc8); border: 1px solid #a9bfd6; border-bottom: 0; white-space: nowrap; }
.tab svg { width: 20px; height: 20px; margin-right: 6px; }
.tab a { flex: 1; padding-top: 2px; }
.tab button { color: #d4e2ee; font-size: 16px; }
.t1 { width: 154px; }
.t2 { width: 135px; }
.t3 { width: 208px; }
.t4 { width: 238px; }
.tab.active { background: linear-gradient(#fff 10px, #ececec 11px); border-top: 3px solid #ffc87c; }
.active a { padding-top: 0; font-size: 15px; }
.tab.active button { color: #b8b8b8; }
.tablist { width: 19px; height: 20px; margin: 4px 0 0 auto; border-radius: 3px; border-bottom: 1px solid #6c88a8; background: linear-gradient(#9cb2cc, #86a2c0); display: flex; justify-content: center; align-items: center; }
.tablist::before { content: ""; width: 10px; height: 6px; background: #dce8f2; clip-path: polygon(0 0, 100% 0, 50% 100%); }
.frame { flex: 1; display: flex; flex-direction: column; background: #fff; border: 1px solid #90a0a8; border-top-color: #fff; border-bottom: 2px solid #98a0a0; }
.canvas { flex: 1; position: relative; margin: 1px 1px 0; border: 2px solid #a8a8a8; border-bottom: 4px double #8c8c80; border-right: 4px double #8c8c80; }
.subtabs { height: 29px; display: flex; padding: 0 3px; flex: none; }
.subtabs button { height: 26px; width: 108px; margin-top: -1px; border: 1px solid #c8c8b8; border-bottom-width: 2px; border-radius: 0 0 4px 4px; background: linear-gradient(90deg, #1460e8, #dceaff); color: #fff; font-size: 15px; line-height: 20px; }

.entity { position: absolute; left: 69px; top: 84px; width: 285px; border: 1px solid #22d; background: #ffffb3; font-size: 13px; line-height: 19px; color: #000; }
.entity h3 { font-size: 13px; line-height: 22px; padding-top: 1px; text-align: center; color: #00d; border-bottom: 1px solid #22d; height: 24px; }
.entity table { border-collapse: collapse; table-layout: fixed; width: 100%; margin: 3px 0 2px; }
.entity td { padding: 0; height: 19px; white-space: nowrap; }
.entity td:nth-child(1) { width: 18px; padding-left: 2px; }
.entity td:nth-child(2) { width: 14px; }
.entity td:nth-child(3) { width: 102px; }
.entity .pk { color: #00d; }
.entity .req { color: #e00; }
.entity .type { color: #008000; }
.entity p { display: flex; align-items: center; gap: 3px; height: 27px; padding-left: 2px; border-top: 1px solid #22d; }
.entity p svg { width: 18px; height: 18px; }
.relation { position: absolute; left: 228px; top: 168px; }

.share { position: absolute; right: 1px; bottom: 0; width: 523px; height: 55px; display: flex; align-items: center; padding: 0 14px 0 12px; border: 1px solid #d4d4d4; border-bottom: 0; background: #fff; color: #333; font: 16px/22px "Noto Sans CJK KR", sans-serif; white-space: nowrap; }
.grip { width: 8px; height: 14px; border: solid #d8d8d8; border-width: 0 3px; }
.msg { margin-left: 12px; flex: 1; }
.stop { width: 107px; height: 40px; border-radius: 4px; background: #2478e8; color: #fff; }
.hide { margin-left: 12px; color: #2478e8; }

.taskbar { height: 2px; background: #2f3e4e; display: flex; }
.taskbar span { width: 430px; margin-left: 60px; background: #e4e0dc; }

.ink { position: absolute; left: 0; top: 0; pointer-events: none; }
.note-en { font: 300 63px Roboto, "Liberation Sans", sans-serif; }
.note-ko { font: 300 50px "Noto Sans CJK KR", sans-serif; }
```
